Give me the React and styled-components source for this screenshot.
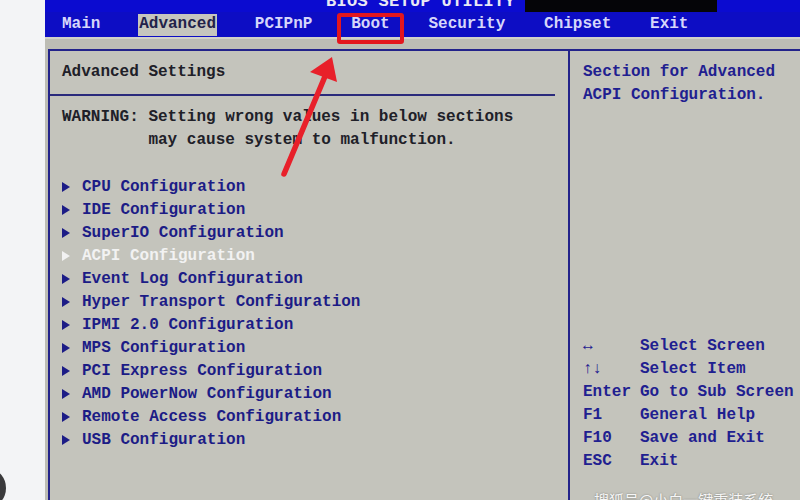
import React from "react";
import styled, { createGlobalStyle } from "styled-components";

const Global = createGlobalStyle`
  html, body { margin: 0; padding: 0; background: #f2f3f5; }
  #root { width: 800px; height: 500px; }
`;

const mono = `"Liberation Mono", "DejaVu Sans Mono", monospace`;

const Page = styled.div`
  position: relative;
  width: 800px;
  height: 500px;
  display: flex;
  overflow: hidden;
  font-family: ${mono};
  font-weight: bold;
  font-size: 16px;
`;

const LeftStrip = styled.div`
  width: 45px;
  flex: none;
  background: #f3f4f6;
  display: flex;
  flex-direction: column;
  justify-content: flex-end;
`;

const Blob = styled.div`
  width: 30px;
  height: 36px;
  margin-left: -24px;
  margin-bottom: -6px;
  border-radius: 50%;
  background: #3a3a3c;
`;

const Screen = styled.div`
  flex: 1;
  display: flex;
  flex-direction: column;
  min-width: 0;
  background: #bdbdb5;
`;

const TitleRow = styled.div`
  height: 12px;
  display: flex;
  overflow: hidden;
`;

const TitleBlue = styled.div`
  width: ${(p) => p.$w}px;
  flex: ${(p) => (p.$w ? "none" : "1")};
  background: #0b0bd0;
  display: flex;
  justify-content: flex-end;
  padding-right: ${(p) => (p.$w ? 10 : 0)}px;
  box-sizing: border-box;
`;

const TitleBlack = styled.div`
  width: 192px;
  flex: none;
  background: #050508;
`;

const TitleText = styled.span`
  display: block;
  color: #e8e8f4;
  font-size: 17px;
  line-height: 12px;
  margin-top: -4px;
  letter-spacing: 0.3px;
  white-space: pre;
`;

const MenuBar = styled.div`
  height: 25px;
  background: #0d0dc4;
  display: flex;
  align-items: flex-end;
  gap: 36.8px;
  padding-left: 16px;
`;

const MenuItem = styled.div`
  height: 22px;
  line-height: 21px;
  padding: 0 1px;
  margin-bottom: 1px;
  color: ${(p) => (p.$active ? "#22224a" : "#d6d6fa")};
  background: ${(p) => (p.$active ? "#c6c6be" : "transparent")};
  white-space: pre;
`;

const Body = styled.div`
  flex: 1;
  display: flex;
  flex-direction: column;
  padding: 10px 0 0 3px;
  border-top: 2px solid #d2d2ca;
  min-height: 0;
`;

const Panel = styled.div`
  flex: 1;
  display: flex;
  background: #c4c4bc;
  border-top: 2px solid #23238a;
  border-left: 2px solid #23238a;
`;

const LeftPane = styled.div`
  width: 518px;
  flex: none;
  border-right: 2px solid #23238a;
  display: flex;
  flex-direction: column;
  padding-top: 10px;
`;

const Line = styled.div`
  height: 23px;
  line-height: 23px;
  padding-left: 12px;
  color: ${(p) => p.$color || "#202028"};
  white-space: pre;
`;

const Rule = styled.div`
  height: 2px;
  background: #2a2a7c;
  margin: 10px 13px 10px 0;
`;

const List = styled.div`
  margin-top: 23px;
  display: flex;
  flex-direction: column;
`;

const Item = styled.div`
  height: 23px;
  display: flex;
  align-items: center;
  gap: 12px;
  padding-left: 12px;
  color: ${(p) => (p.$selected ? "#f2f2f2" : "#1c1c86")};
  white-space: pre;
`;

const Tri = styled.span`
  width: 0;
  height: 0;
  border-top: 5px solid transparent;
  border-bottom: 5px solid transparent;
  border-left: 8px solid ${(p) => (p.$selected ? "#f2f2f2" : "#1c1c86")};
`;

const RightPane = styled.div`
  flex: 1;
  display: flex;
  flex-direction: column;
  padding: 10px 0 28px 13px;
  color: #1f2090;
`;

const HelpLine = styled.div`
  height: 23px;
  line-height: 23px;
  white-space: pre;
`;

const Legend = styled.div`
  margin-top: auto;
  display: grid;
  grid-template-columns: 57px auto;
  grid-auto-rows: 23px;
  align-items: center;
  white-space: pre;
`;

const RedBox = styled.div`
  position: absolute;
  left: 337px;
  top: 13px;
  width: 67px;
  height: 31px;
  box-sizing: border-box;
  border: 4px solid #e3161e;
  border-radius: 3px;
`;

const ArrowSvg = styled.svg`
  position: absolute;
  left: 270px;
  top: 50px;
  width: 80px;
  height: 140px;
  overflow: visible;
`;

const Watermark = styled.div`
  position: absolute;
  left: 594px;
  top: 489px;
  font-family: "Noto Sans CJK SC", "Noto Sans", sans-serif;
  font-weight: normal;
  font-size: 15px;
  color: #f6f6f6;
  white-space: nowrap;
  text-shadow: 0 0 2px rgba(0, 0, 0, 0.4);
`;

const menus = ["Main", "Advanced", "PCIPnP", "Boot", "Security", "Chipset", "Exit"];

const items = [
  "CPU Configuration",
  "IDE Configuration",
  "SuperIO Configuration",
  "ACPI Configuration",
  "Event Log Configuration",
  "Hyper Transport Configuration",
  "IPMI 2.0 Configuration",
  "MPS Configuration",
  "PCI Express Configuration",
  "AMD PowerNow Configuration",
  "Remote Access Configuration",
  "USB Configuration",
];

const keys = [
  ["↔", "Select Screen"],
  ["↑↓", "Select Item"],
  ["Enter", "Go to Sub Screen"],
  ["F1", "General Help"],
  ["F10", "Save and Exit"],
  ["ESC", "Exit"],
];

export default function App() {
  return (
    <>
      <Global />
      <Page>
        <LeftStrip>
          <Blob />
        </LeftStrip>
        <Screen>
          <TitleRow>
            <TitleBlue $w={480}>
              <TitleText>BIOS SETUP UTILITY</TitleText>
            </TitleBlue>
            <TitleBlack />
            <TitleBlue />
          </TitleRow>
          <MenuBar>
            {menus.map((m) => (
              <MenuItem key={m} $active={m === "Advanced"}>
                {m}
              </MenuItem>
            ))}
          </MenuBar>
          <Body>
            <Panel>
              <LeftPane>
                <Line>Advanced Settings</Line>
                <Rule />
                <Line>WARNING: Setting wrong values in below sections</Line>
                <Line>{"         may cause system to malfunction."}</Line>
                <List>
                  {items.map((it) => {
                    const sel = it === "ACPI Configuration";
                    return (
                      <Item key={it} $selected={sel}>
                        <Tri $selected={sel} />
                        {it}
                      </Item>
                    );
                  })}
                </List>
              </LeftPane>
              <RightPane>
                <HelpLine>Section for Advanced</HelpLine>
                <HelpLine>ACPI Configuration.</HelpLine>
                <Legend>
                  {keys.map(([k, d]) => (
                    <React.Fragment key={k}>
                      <span>{k}</span>
                      <span>{d}</span>
                    </React.Fragment>
                  ))}
                </Legend>
              </RightPane>
            </Panel>
          </Body>
        </Screen>
        <RedBox />
        <ArrowSvg viewBox="270 50 80 140">
          <line x1="284" y1="174" x2="326" y2="74" stroke="#e8202a" strokeWidth="5.5" strokeLinecap="round" />
          <polygon points="332,57 310,72 337,82" fill="#e8202a" />
        </ArrowSvg>
        <Watermark>搜狐号@小白一键重装系统</Watermark>
      </Page>
    </>
  );
}
